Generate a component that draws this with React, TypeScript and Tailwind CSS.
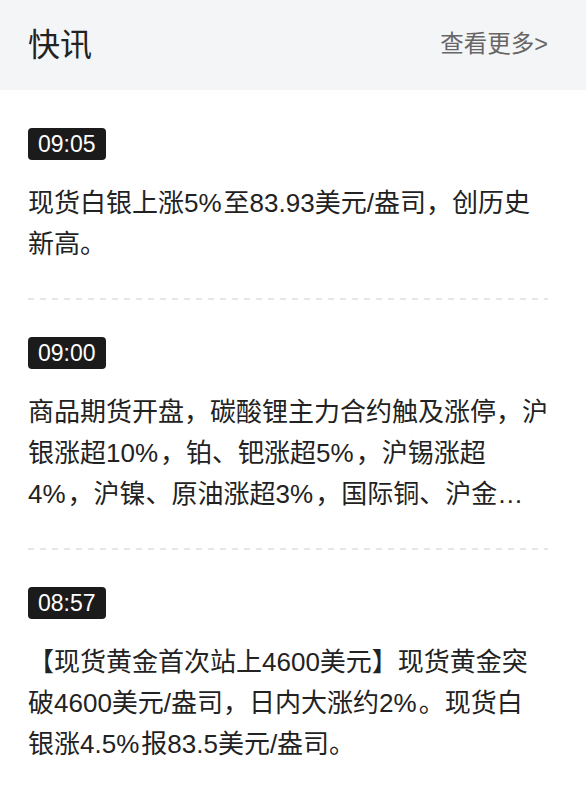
import React from 'react';

const news = [
    {time: '09:05', text: '现货白银上涨5%至83.93美元/盎司，创历史新高。'},
    {
        time: '09:00',
        text: '商品期货开盘，碳酸锂主力合约触及涨停，沪银涨超10%，铂、钯涨超5%，沪锡涨超4%，沪镍、原油涨超3%，国际铜、沪金等品种跟涨。',
    },
    {time: '08:57', text: '【现货黄金首次站上4600美元】现货黄金突破4600美元/盎司，日内大涨约2%。现货白银涨4.5%报83.5美元/盎司。'},
];

// 百分号在原图里更宽一些，单独加点字距
const renderText = (text: string) =>
    text.split('%').map((part, i, arr) => (
        <React.Fragment key={i}>
            {part}
            {i < arr.length - 1 && <span className="tracking-[2px]">%</span>}
        </React.Fragment>
    ));

const NewsItem = ({time, text, first}: {time: string; text: string; first: boolean}) => (
    <div className={first ? 'pt-[38px] pb-[33px]' : 'pt-[37px] pb-[33px]'}>
        {/* 时间标签 */}
        <span className="inline-block h-[32px] px-[10px] rounded-[4px] bg-[#1b1b1b] text-white text-[23px] leading-[32px]">
            {time}
        </span>
        <p className="mt-[23px] text-[26px] leading-[41px] text-[#222] line-clamp-3">{renderText(text)}</p>
    </div>
);

const App = () => {
    return (
        <div className="w-[586px] min-h-[806px] bg-white font-['Liberation_Sans','Noto_Sans_CJK_SC',sans-serif]">
            {/* 顶栏 */}
            <div className="h-[90px] bg-[#f4f5f7] flex items-center justify-between pl-[28px] pr-[38px]">
                <h2 className="text-[32px] text-[#222] font-normal">快讯</h2>
                <span className="text-[23.5px] text-[#666]">查看更多&gt;</span>
            </div>

            {/* 列表 */}
            <div className="pl-[28px] pr-[38px]">
                {news.map((item, i) => (
                    <div key={item.time}>
                        {i > 0 && (
                            <div className="h-[2px] bg-[linear-gradient(to_right,#e6e6e6_50%,transparent_50%)] bg-[length:12px_2px] bg-repeat-x"/>
                        )}
                        <NewsItem time={item.time} text={item.text} first={i === 0}/>
                    </div>
                ))}
            </div>
        </div>
    );
};

export default App;
